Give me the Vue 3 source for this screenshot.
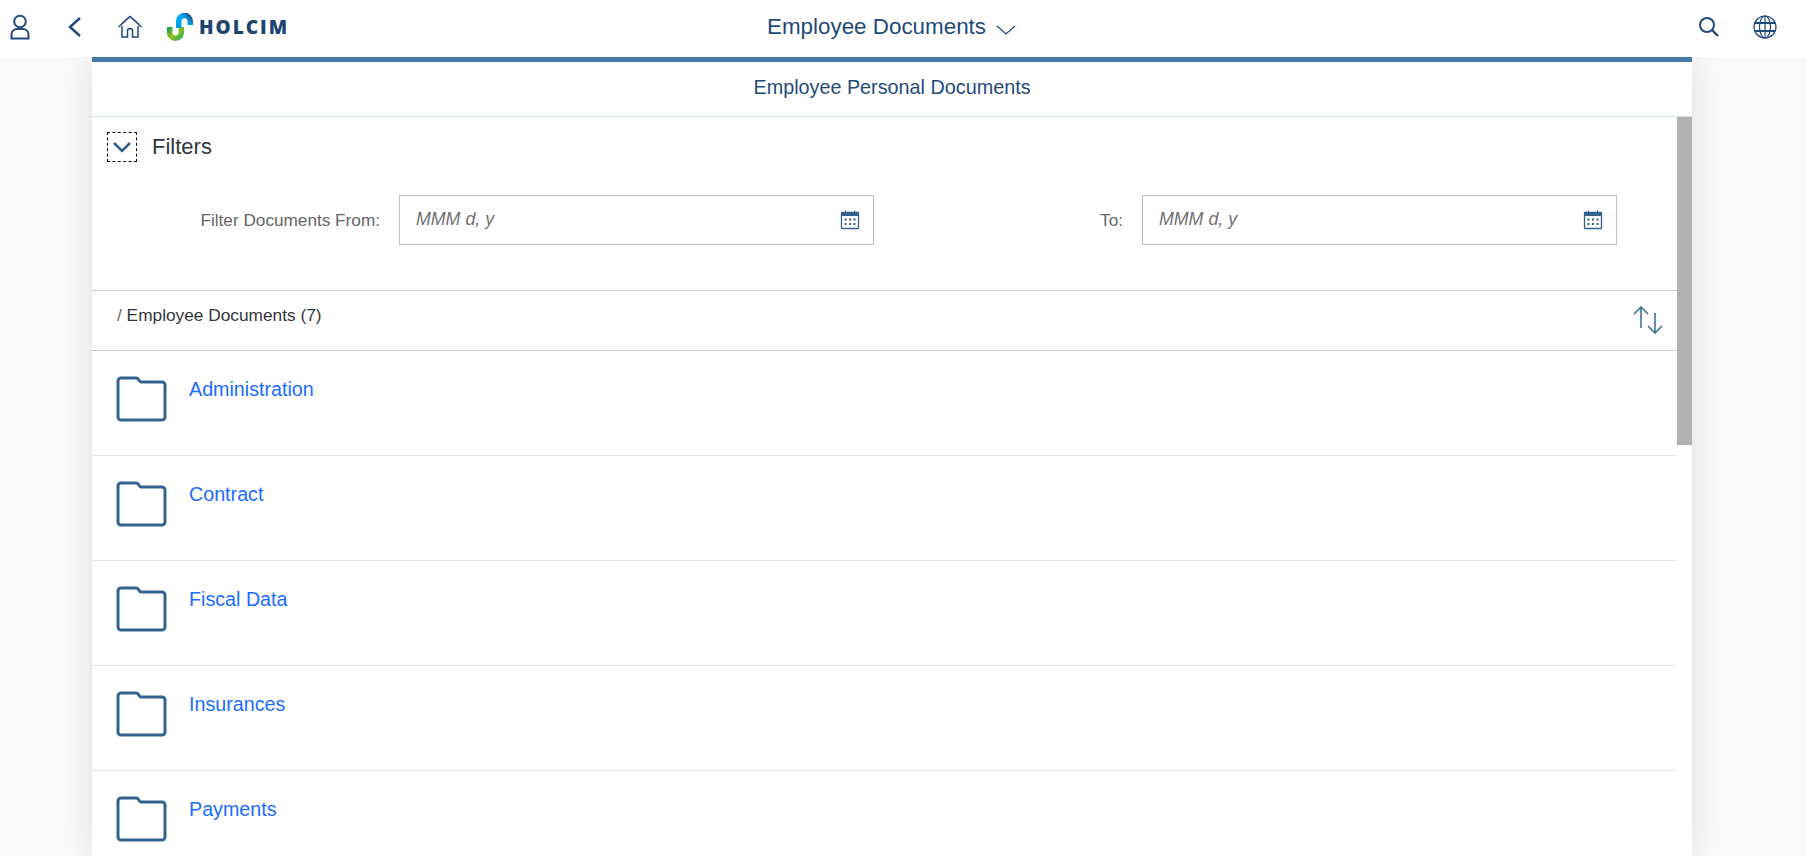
<template>
  <div class="page">
    <header class="shell">
      <div class="shell-left">
        <svg class="ico" viewBox="0 0 24 28" fill="none" stroke="#1f4a79" stroke-width="2">
          <circle cx="12" cy="8.5" r="5.800" />
          <path d="M3.500 25.500v-4.500a5.500 5.500 0 0 1 5.500-5h6a5.500 5.500 0 0 1 5.500 5v4.500z" />
        </svg>
        <svg class="ico" viewBox="0 0 24 28" fill="none" stroke="#1f4a79" stroke-width="2.4">
          <path d="M17 5l-10 9 10 9" />
        </svg>
        <svg class="ico" viewBox="0 0 24 28" fill="none" stroke="#1f4a79" stroke-width="1.5">
          <path d="M0.5 14L12 3.5 23.500 14" />
          <path d="M3 11L12 3 21 11" stroke-width="1" />
          <path d="M4 13v11h5.500v-6a2.500 2.500 0 0 1 5 0v6H20V13" />
        </svg>
        <div class="logo">
          <svg class="logo-mark" viewBox="0 0 26 28" fill="none" stroke-width="5.500">
            <defs>
              <linearGradient id="logoBlue" x1="0" y1="1" x2="1" y2="0">
                <stop offset="0" stop-color="#00a3e0" />
                <stop offset="0.6" stop-color="#00aeef" />
                <stop offset="1" stop-color="#1d4f91" />
              </linearGradient>
              <linearGradient id="logoGreen" x1="0" y1="0" x2="1" y2="1">
                <stop offset="0" stop-color="#1f9d55" />
                <stop offset="0.5" stop-color="#94c11f" />
                <stop offset="1" stop-color="#3bae49" />
              </linearGradient>
            </defs>
            <path d="M2.750 14v5.500a5.750 5.750 0 0 0 11.500 0V14" stroke="url(#logoGreen)" />
            <path d="M11.750 15V8.250a5.750 5.750 0 0 1 11.500 0V12" stroke="url(#logoBlue)" />
          </svg>
          <span class="logo-text">HOLCIM</span>
        </div>
      </div>
      <div class="shell-title">
        <span>Employee Documents</span>
        <svg class="title-arrow" viewBox="0 0 20 12" fill="none" stroke="#1f4a79" stroke-width="1.3">
          <path d="M1 2l9 8 9-8" />
        </svg>
      </div>
      <div class="shell-right">
        <svg class="ico" viewBox="0 0 24 24" fill="none" stroke="#1f4a79" stroke-width="2">
          <circle cx="11" cy="10" r="7" />
          <path d="M16 15l6 6" stroke-width="2.400" />
        </svg>
        <svg class="ico" viewBox="0 0 24 24" fill="none" stroke="#1f4a79" stroke-width="1.200">
          <circle cx="12" cy="12" r="11" />
          <ellipse cx="12" cy="12" rx="5.500" ry="11" />
          <path d="M12 1v22" />
          <path d="M1.500 8h21M1.500 16h21" stroke-width="1.800" />
        </svg>
      </div>
    </header>

    <main class="card">
      <h1 class="card-title">Employee Personal Documents</h1>
      <div class="card-body">
        <div class="content">
          <section class="filters">
            <div class="filters-head">
              <button class="toggle">
                <svg viewBox="0 0 20 12" width="20" height="12" fill="none" stroke="#34628e" stroke-width="2.600">
                  <path d="M2 2l8 8 8-8" />
                </svg>
              </button>
              <span class="filters-label">Filters</span>
            </div>
            <div class="filters-form">
              <label class="field-label">Filter Documents From:</label>
              <div class="date-input">
                <span class="placeholder">MMM d, y</span>
                <svg class="cal" viewBox="0 0 20 20" fill="none" stroke="#34628e">
                  <rect x="1.500" y="2.500" width="17" height="16" rx="0.500" stroke-width="1.300" />
                  <path d="M1.500 4.500h17" stroke-width="3" />
                  <path d="M5.500 0.500v3M14.500 0.500v3" stroke-width="1" />
                  <path d="M4.500 9.500h2M9 9.500h2M13.500 9.500h2M4.500 14h2M9 14h2M13.500 14h2" stroke-width="2" />
                </svg>
              </div>
              <label class="field-label">To:</label>
              <div class="date-input">
                <span class="placeholder">MMM d, y</span>
                <svg class="cal" viewBox="0 0 20 20" fill="none" stroke="#34628e">
                  <rect x="1.500" y="2.500" width="17" height="16" rx="0.500" stroke-width="1.300" />
                  <path d="M1.500 4.500h17" stroke-width="3" />
                  <path d="M5.500 0.500v3M14.500 0.500v3" stroke-width="1" />
                  <path d="M4.500 9.500h2M9 9.500h2M13.500 9.500h2M4.500 14h2M9 14h2M13.500 14h2" stroke-width="2" />
                </svg>
              </div>
            </div>
          </section>

          <div class="crumbs">
            <span class="crumb-text"><span class="slash">/</span> Employee Documents (7)</span>
            <svg class="sort" viewBox="0 0 30 29" fill="none" stroke="#3f729f" stroke-width="1.600">
              <path d="M8 22V1M1 8l7-7 7 7" />
              <path d="M22 7v20M15 20l7 7 7-7" />
            </svg>
          </div>

          <div v-for="folder in folders" :key="folder" class="row">
            <svg class="folder" viewBox="0 0 52 46" fill="none" stroke="#34628e" stroke-width="3" stroke-linejoin="round">
              <path d="M3 5a3 3 0 0 1 3-3h15a3 3 0 0 1 2.500 1.500l1 1.500a2 2 0 0 0 2 1H47a3 3 0 0 1 3 3V41a3 3 0 0 1-3 3H6a3 3 0 0 1-3-3z" />
            </svg>
            <a class="folder-link">{{ folder }}</a>
          </div>
        </div>
        <div class="scrollbar"><div class="thumb"></div></div>
      </div>
    </main>
  </div>
</template>

<script setup>
const folders = ['Administration', 'Contract', 'Fiscal Data', 'Insurances', 'Payments']
</script>

<style>
html, body {
  margin: 0;
  overflow: hidden;
  background: #fafafa;
}
</style>

<style scoped>
.page {
  height: 856px;
  display: flex;
  flex-direction: column;
  overflow: hidden;
  font-family: "Liberation Sans", Arial, sans-serif;
  color: #32363a;
}

.shell {
  height: 57px;
  flex: none;
  display: grid;
  grid-template-columns: 1fr auto 1fr;
  align-items: center;
  padding: 0 30px 4px 8px;
  box-sizing: border-box;
  background: #fff;
  position: relative;
  z-index: 1;
}

.shell-left {
  display: flex;
  align-items: center;
  gap: 31px;
}

.shell-right {
  display: flex;
  justify-content: flex-end;
  align-items: center;
  gap: 33px;
}

.ico {
  width: 24px;
  height: 28px;
  display: block;
}

.logo {
  display: flex;
  align-items: center;
  gap: 6px;
  margin-left: -6px;
}

.logo-mark {
  width: 26px;
  height: 28px;
}

.logo-text {
  font-family: "Open Sans", sans-serif;
  font-weight: 800;
  font-size: 19px;
  letter-spacing: 2px;
  color: #1d4370;
}

.shell-title {
  display: flex;
  align-items: center;
  gap: 10px;
  font-size: 22.400px;
  color: #1f4a79;
  margin-right: 2px;
}

.title-arrow {
  width: 20px;
  height: 12px;
  margin-top: 6px;
}

.card {
  width: 1600px;
  flex: 1;
  margin-left: 92px;
  background: #fff;
  border-top: 5px solid #4479a8;
  box-shadow: 0 0 30px rgba(0, 0, 0, 0.12);
  display: flex;
  flex-direction: column;
  min-height: 0;
}

.card-title {
  margin: 0;
  height: 51px;
  padding-bottom: 3px;
  flex: none;
  display: flex;
  align-items: center;
  justify-content: center;
  box-sizing: content-box;
  border-bottom: 1px solid #d6e3f3;
  font-size: 19.800px;
  font-weight: 400;
  color: #1f4a79;
}

.card-body {
  flex: 1;
  display: flex;
  min-height: 0;
  overflow: hidden;
}

.content {
  flex: 1;
  min-width: 0;
}

.scrollbar {
  width: 15px;
  flex: none;
}

.thumb {
  height: 328px;
  background: #b0b0b0;
}

.filters {
  height: 174px;
  box-sizing: border-box;
  padding: 15px 0 0 15px;
  border-bottom: 1px solid #ccc;
}

.filters-head {
  display: flex;
  align-items: center;
  gap: 15px;
}

.toggle {
  width: 30px;
  height: 30px;
  padding: 0;
  display: flex;
  align-items: center;
  justify-content: center;
  background: none;
  border: 1px dashed #000;
}

.filters-label {
  font-size: 22px;
  color: #32363a;
}

.filters-form {
  margin: 33px 0 0 -15px;
  display: grid;
  grid-template-columns: 288px 475px 230px 475px;
  column-gap: 19px;
  align-items: center;
}

.field-label {
  text-align: right;
  font-size: 17.200px;
  color: #666;
}

.date-input {
  height: 50px;
  box-sizing: border-box;
  display: flex;
  align-items: center;
  justify-content: space-between;
  padding: 0 13px 0 16px;
  border: 1px solid #bfbfbf;
}

.placeholder {
  font-size: 17.800px;
  font-style: italic;
  color: #707070;
  margin-bottom: 2px;
}

.cal {
  width: 20px;
  height: 20px;
}

.crumbs {
  height: 60px;
  box-sizing: border-box;
  display: flex;
  align-items: center;
  justify-content: space-between;
  padding: 0 14px 0 25px;
  border-bottom: 1px solid #ccc;
  font-size: 17.300px;
  color: #32363a;
}

.crumb-text {
  margin-bottom: 11px;
}

.slash {
  color: #666;
}

.sort {
  width: 30px;
  height: 29px;
}

.row {
  height: 105px;
  box-sizing: border-box;
  display: flex;
  align-items: flex-start;
  gap: 22px;
  padding: 25px 0 0 23px;
  border-bottom: 1px solid #e5e5e5;
}

.folder {
  width: 52px;
  height: 46px;
  flex: none;
}

.folder-link {
  font-size: 19.700px;
  color: #1a6cff;
  margin-top: 2px;
}
</style>
